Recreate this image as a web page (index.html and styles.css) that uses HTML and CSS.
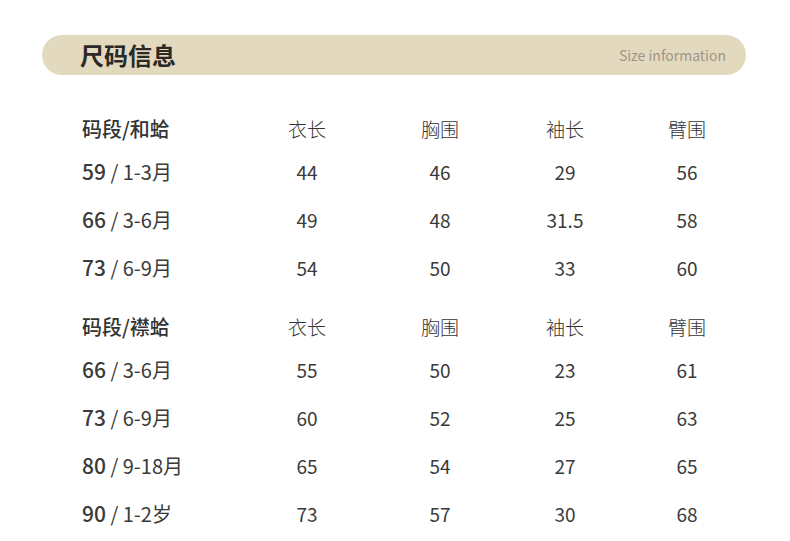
FILE: index.html
```html
<!DOCTYPE html>
<html lang="zh">
<head>
<meta charset="utf-8">
<link rel="stylesheet" href="styles.css">
</head>
<body>
<div class="page">
  <div class="banner">
    <span class="title">尺码信息</span>
    <span class="sub">Size information</span>
  </div>

  <div class="table">
    <div class="row head">
      <div class="c1">码段/和蛤</div><div>衣长</div><div>胸围</div><div>袖长</div><div>臂围</div>
    </div>
    <div class="row"><div class="c1"><b>59</b> / 1-3月</div><div>44</div><div>46</div><div>29</div><div>56</div></div>
    <div class="row"><div class="c1"><b>66</b> / 3-6月</div><div>49</div><div>48</div><div>31.5</div><div>58</div></div>
    <div class="row"><div class="c1"><b>73</b> / 6-9月</div><div>54</div><div>50</div><div>33</div><div>60</div></div>
  </div>

  <div class="table second">
    <div class="row head">
      <div class="c1">码段/襟蛤</div><div>衣长</div><div>胸围</div><div>袖长</div><div>臂围</div>
    </div>
    <div class="row"><div class="c1"><b>66</b> / 3-6月</div><div>55</div><div>50</div><div>23</div><div>61</div></div>
    <div class="row"><div class="c1"><b>73</b> / 6-9月</div><div>60</div><div>52</div><div>25</div><div>63</div></div>
    <div class="row"><div class="c1"><b>80</b> / 9-18月</div><div>65</div><div>54</div><div>27</div><div>65</div></div>
    <div class="row"><div class="c1"><b>90</b> / 1-2岁</div><div>73</div><div>57</div><div>30</div><div>68</div></div>
  </div>
</div>
</body>
</html>
```

FILE: styles.css
```css
* { box-sizing: border-box; }
html, body {
  margin: 0;
  padding: 0;
  background: #ffffff;
}
body {
  font-family: "Noto Sans CJK SC", "Noto Sans", sans-serif;
  color: #333333;
  width: 790px;
  height: 541px;
  overflow: hidden;
}
.page {
  padding-top: 35px;
}
.banner {
  margin: 0 44px 0 42px;
  height: 40px;
  border-radius: 20px;
  background: #e3d9bf;
  display: flex;
  align-items: center;
  justify-content: space-between;
  padding: 0 20px 0 38px;
}
.title {
  font-size: 24px;
  font-weight: 700;
  color: #2b2926;
  line-height: 40px;
}
.sub {
  font-size: 14px;
  color: #9e9684;
  line-height: 40px;
}
.table {
  margin-top: 35px;
  padding-left: 82px;
}
.table.second {
  margin-top: 17px;
}
.row {
  display: grid;
  grid-template-columns: 159px 132px 134px 116px 128px;
  height: 48px;
  align-items: center;
  font-size: 19px;
  color: #3a3a3a;
}
.row > div {
  text-align: center;
  line-height: 48px;
}
.row > .c1 {
  text-align: left;
  font-size: 20px;
}
.row .c1 b {
  font-size: 21px;
  font-weight: 500;
}
.row.head {
  height: 37px;
  font-weight: 300;
  color: #333333;
}
.row.head > div {
  line-height: 37px;
}
.row.head > .c1 {
  font-size: 20px;
  font-weight: 500;
}
```
